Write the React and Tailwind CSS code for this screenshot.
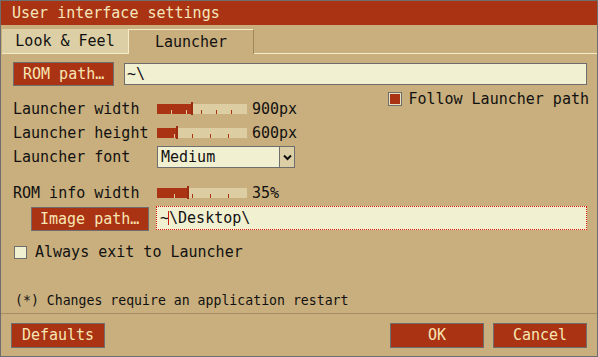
import React from 'react';

const RED = '#aa3313';

function Slider({ fill, step, ticks }) {
  // track is 90px wide, thumb sits at the end of the fill
  return (
    <svg width="90" height="14" className="shrink-0">
      <rect x="0" y="2" width="90" height="10" fill="#dccda3" />
      <rect x="0" y="2" width={fill} height="10" fill={RED} />
      {Array.from({ length: ticks }).map((_, i) => {
        const x = step * (i + 1) - 1;
        return <rect key={i} x={x} y="8" width="1" height="4" fill={x < fill ? '#dccda3' : RED} />;
      })}
      <rect x={fill - 1} y="0" width="2" height="13" fill="#9b2c0f" />
    </svg>
  );
}

function SliderRow({ label, value, fill, step, ticks, className = '' }) {
  return (
    <div className={`flex items-center h-[24px] ${className}`}>
      <span className="w-[144px] shrink-0">{label}</span>
      <Slider fill={fill} step={step} ticks={ticks} />
      <span className="ml-[5px]">{value}</span>
    </div>
  );
}

export default function App() {
  return (
    <div className="w-[598px] h-[357px] border border-[#6e6e6e] bg-[#c9af7d] flex flex-col text-[15px] text-[#111] font-['DejaVu_Sans_Mono',monospace] leading-none overflow-hidden">
      <div className="h-[24px] shrink-0 bg-[#aa3313] text-[#f5e7bd] pl-[11px] flex items-center">User interface settings</div>

      <div className="h-[29px] shrink-0 flex items-end pl-[1px]">
        <div className="w-[126px] h-[25px] bg-[#dccfa5] border-b border-[#f4ecc9] flex items-center justify-center">Look &amp; Feel</div>
        <div className="w-[126px] h-[25px] border-t border-l border-r border-t-[#f4ecc9] border-l-[#f4ecc9] border-r-[#a08858] flex items-center justify-center">Launcher</div>
        <div className="flex-1 h-full border-b border-[#f4ecc9]" />
      </div>

      <div className="flex-1 flex flex-col pl-[12px] pr-[10px]">
        <div className="mt-[8px] h-[24px] flex items-center">
          <button className="w-[101px] h-[24px] bg-[#aa3313] border border-[#6e6e6e] text-[#f7e6b3] text-left pl-[9px]">ROM path…</button>
          <div className="ml-[10px] flex-1 h-[22px] bg-[#f1f0d1] border border-[#6e6e6e] flex items-center pl-[2px]">~\</div>
        </div>

        <div className="mt-[6px] h-[14px] flex items-center justify-end mr-[-2px]">
          <div className="w-[14px] h-[14px] border border-[#6e6e6e] bg-[#e9e0c0] p-[1px]">
            <div className="w-full h-full bg-[#aa3313]" />
          </div>
          <span className="ml-[6px]">Follow Launcher path</span>
        </div>

        <div className="mt-[-9px]">
          <SliderRow label="Launcher width" value="900px" fill={35} step={15} ticks={5} />
          <SliderRow label="Launcher height" value="600px" fill={20} step={18} ticks={4} />
          <div className="mt-[1px] h-[22px] flex items-center">
            <span className="w-[144px] shrink-0">Launcher font</span>
            <div className="w-[138px] h-[22px] bg-[#f1f0d1] border border-[#6e6e6e] flex items-stretch">
              <span className="flex-1 flex items-center pl-[3px]">Medium</span>
              <span className="w-[15px] bg-[#dccfa5] border-l border-[#6e6e6e] flex items-center justify-center">
                <svg width="9" height="7" viewBox="0 0 9 7">
                  <polyline points="1,1.5 4.5,5 8,1.5" fill="none" stroke="#111" strokeWidth="2" />
                </svg>
              </span>
            </div>
          </div>
          <SliderRow label="ROM info width" value="35%" fill={31} step={18} ticks={4} className="mt-[13px]" />
        </div>

        <div className="mt-[1px] h-[25px] flex items-start">
          <button className="ml-[18px] mt-[1px] w-[118px] h-[24px] bg-[#aa3313] border border-[#6e6e6e] text-[#f7e6b3] text-left pl-[8px]">Image path…</button>
          <div className="ml-[7px] flex-1 h-[24px] bg-[#f1f0d1] border border-dotted border-[#e0140f] flex items-center pl-[3px]">
            <span>~</span>
            <span className="w-px h-[14px] bg-[#cc1a10] -ml-px" />
            <span>\Desktop\</span>
          </div>
        </div>

        <div className="mt-[14px] flex items-center ml-[1px]">
          <div className="w-[13px] h-[13px] border border-[#6e6e6e] bg-[#f1f0d1]" />
          <span className="ml-[8px]">Always exit to Launcher</span>
        </div>

        <div className="mt-auto mb-[4px] pl-[2px] text-[13.2px] leading-[16px]">(*) Changes require an application restart</div>
      </div>

      <div className="shrink-0 border-t border-[#a68d62] pt-[9px] pb-[8px] pl-[10px] pr-[10px] flex">
        <button className="w-[94px] h-[25px] bg-[#aa3313] border border-[#6e6e6e] text-[#f7e6b3]">Defaults</button>
        <div className="flex-1" />
        <button className="w-[94px] h-[25px] bg-[#aa3313] border border-[#6e6e6e] text-[#f7e6b3]">OK</button>
        <button className="ml-[9px] w-[94px] h-[25px] bg-[#aa3313] border border-[#6e6e6e] text-[#f7e6b3]">Cancel</button>
      </div>
    </div>
  );
}
